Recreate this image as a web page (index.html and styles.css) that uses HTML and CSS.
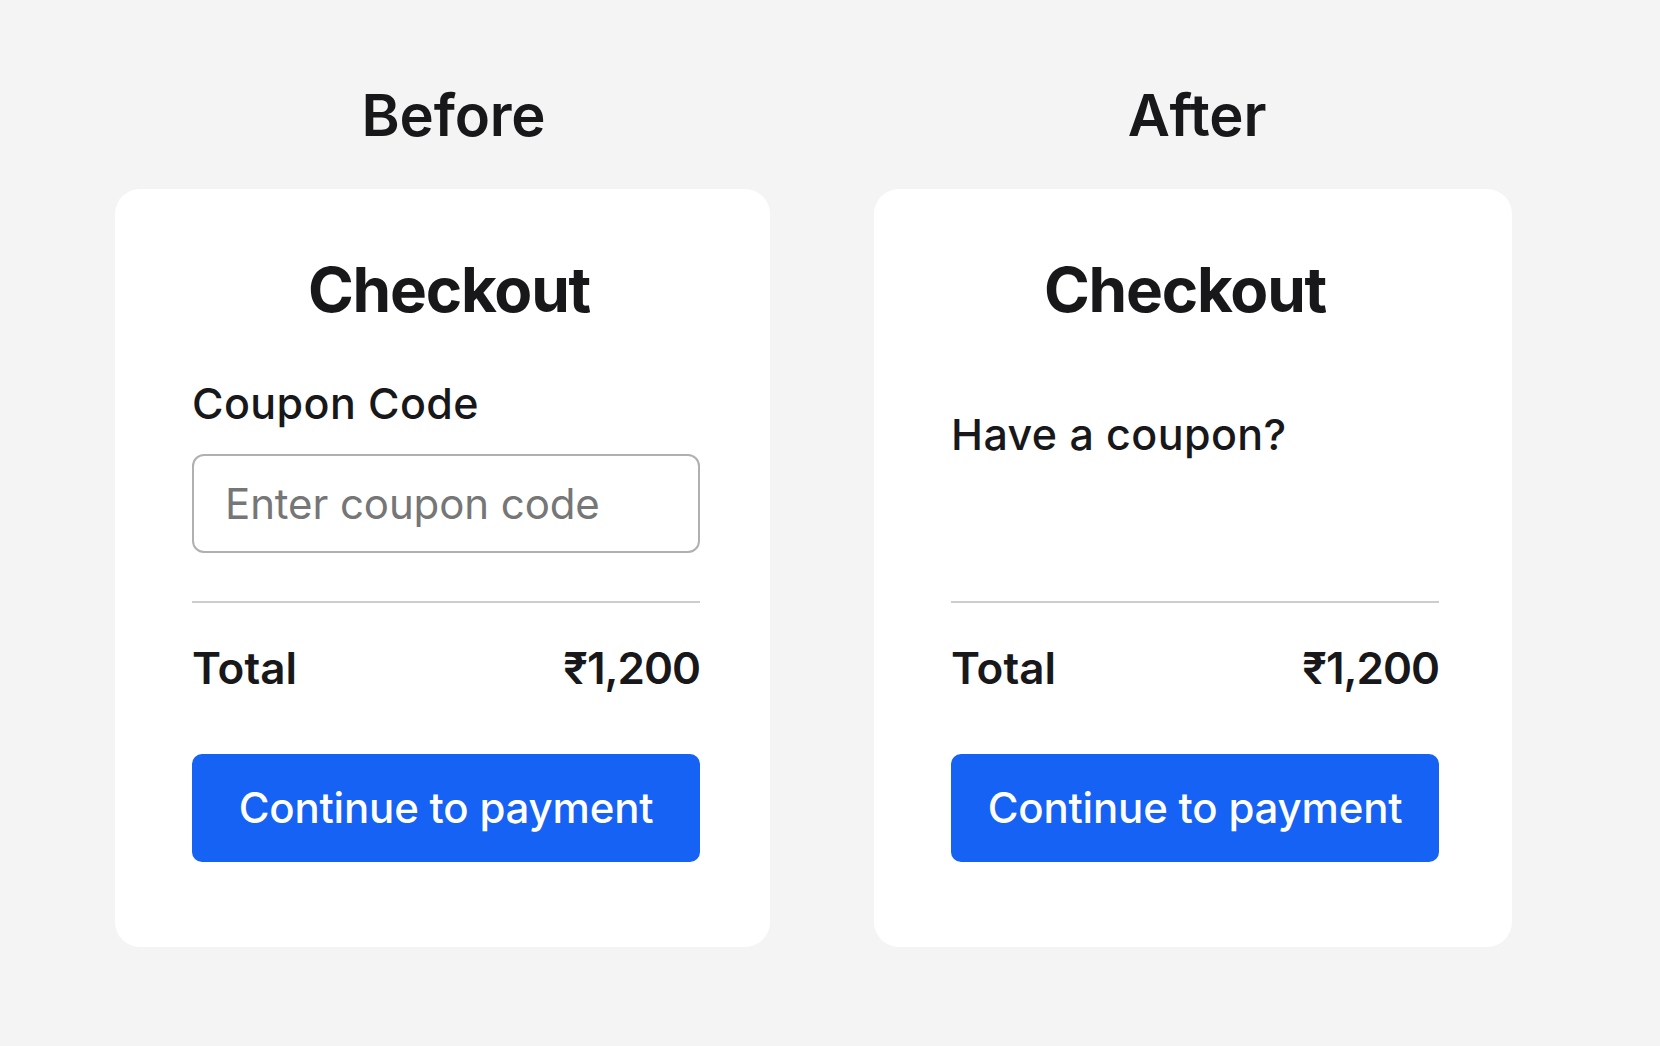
FILE: index.html
```html
<!DOCTYPE html>
<html lang="en">
<head>
<meta charset="utf-8">
<title>Checkout – Before / After</title>
<link rel="stylesheet" href="styles.css">
</head>
<body>
  <main class="compare">
    <section class="column column-before">
      <h2 class="column-title">Before</h2>
      <div class="card card-before">
        <h1 class="card-title">Checkout</h1>
        <div class="coupon-block">
          <label class="coupon-label" for="coupon">Coupon Code</label>
          <div class="coupon-input" id="coupon">Enter coupon code</div>
        </div>
        <hr class="divider">
        <div class="total-row">
          <span>Total</span>
          <span class="price">₹1,200</span>
        </div>
        <button class="pay-button" type="button">Continue to payment</button>
      </div>
    </section>
    <section class="column column-after">
      <h2 class="column-title">After</h2>
      <div class="card card-after">
        <h1 class="card-title">Checkout</h1>
        <div class="coupon-block">
          <p class="coupon-prompt">Have a coupon?</p>
        </div>
        <hr class="divider">
        <div class="total-row">
          <span>Total</span>
          <span class="price">₹1,200</span>
        </div>
        <button class="pay-button" type="button">Continue to payment</button>
      </div>
    </section>
  </main>
</body>
</html>
```
FILE: styles.css
```css
* {
  box-sizing: border-box;
}

html, body {
  margin: 0;
  padding: 0;
}

body {
  background: #f4f4f4;
  font-family: "Inter", "Noto Sans", "DejaVu Sans", sans-serif;
  color: #18181b;
  width: 1660px;
  height: 1046px;
  overflow: hidden;
}

.compare {
  display: flex;
  gap: 104px;
  padding: 86px 0 0 115px;
}

.column {
  display: flex;
  flex-direction: column;
}

.column-before {
  width: 655px;
}

.column-after {
  width: 638px;
}

.column-title {
  margin: 0;
  font-size: 58px;
  line-height: 1;
  font-weight: 600;
  text-align: center;
  letter-spacing: -0.2px;
}

.column-before .column-title {
  padding-left: 22px;
}

.column-after .column-title {
  padding-left: 8px;
}

.card {
  margin-top: 45px;
  background: #ffffff;
  border-radius: 25px;
  height: 758px;
  padding-top: 70px;
  display: flex;
  flex-direction: column;
}

.card-before {
  padding-left: 77px;
  padding-right: 70px;
}

.card-after {
  padding-left: 77px;
  padding-right: 73px;
}

.card-title {
  margin: 0;
  font-size: 62px;
  line-height: 1;
  font-weight: 700;
  text-align: center;
  letter-spacing: -1.2px;
}

.card-before .card-title {
  padding-left: 6px;
}

.card-after .card-title {
  padding-right: 20px;
}

.coupon-block {
  height: 232px;
  display: flex;
  flex-direction: column;
}

.coupon-label {
  display: block;
  margin-top: 61px;
  font-size: 43px;
  line-height: 1;
  font-weight: 500;
  letter-spacing: 0.4px;
}

.coupon-input {
  margin-top: 29px;
  height: 99px;
  border: 2px solid #b0b0b0;
  border-radius: 12px;
  display: flex;
  align-items: center;
  padding-left: 31px;
  font-size: 42px;
  line-height: 1;
  font-weight: 400;
  color: #767676;
  letter-spacing: -0.1px;
}

.coupon-prompt {
  margin: 92px 0 0 0;
  font-size: 43px;
  line-height: 1;
  font-weight: 500;
  letter-spacing: 0.4px;
}

.divider {
  margin: 48px 0 0 0;
  border: 0;
  border-top: 2px solid #cdcdcd;
  height: 0;
}

.total-row {
  margin-top: 43px;
  display: flex;
  justify-content: space-between;
  font-size: 44px;
  line-height: 1;
  font-weight: 600;
}

.price {
  letter-spacing: -1px;
}

.pay-button {
  margin-top: 64px;
  height: 108px;
  width: 100%;
  border: 0;
  border-radius: 10px;
  background: #1562f4;
  color: #ffffff;
  font-family: inherit;
  font-size: 42px;
  line-height: 1;
  font-weight: 500;
  letter-spacing: -0.2px;
  display: flex;
  align-items: center;
  justify-content: center;
  padding: 0;
}
```
